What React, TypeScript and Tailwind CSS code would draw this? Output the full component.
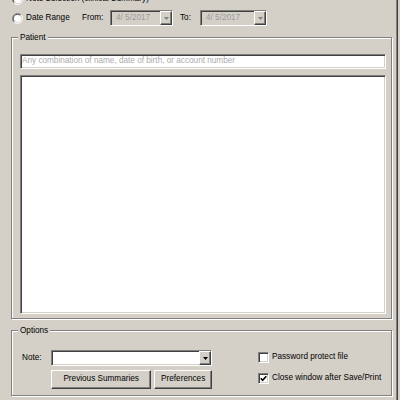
const sunken =
  'border border-t-[#808080] border-l-[#808080] border-b-white border-r-white shadow-[inset_1px_1px_0_#404040,inset_-1px_-1px_0_#d4d0c8]'
const raised =
  'border border-t-white border-l-white border-b-[#404040] border-r-[#404040] shadow-[inset_-1px_-1px_0_#808080]'
const etched = 'border border-[#808080] shadow-[inset_1px_1px_0_#fff,1px_1px_0_#fff]'

function Radio() {
  return (
    <svg width="11" height="11" viewBox="0 0 12 12" className="shrink-0">
      <circle cx="6" cy="6" r="5" fill="#fff" />
      <path d="M2.1 9.9 A5.5 5.5 0 0 1 9.9 2.1" stroke="#808080" fill="none" />
      <path d="M9.9 2.1 A5.5 5.5 0 0 1 2.1 9.9" stroke="#fff" fill="none" />
      <path d="M2.8 9.2 A4.5 4.5 0 0 1 9.2 2.8" stroke="#404040" fill="none" />
      <path d="M9.2 2.8 A4.5 4.5 0 0 1 2.8 9.2" stroke="#d4d0c8" fill="none" />
    </svg>
  )
}

function Arrow({ disabled }: { disabled?: boolean }) {
  return (
    <div className={`w-[12px] h-full flex items-center justify-center bg-[#d4d0c8] ${raised}`}>
      <svg width="5" height="3" viewBox="0 0 5 3">
        <polygon points="0,0 5,0 2.5,3" fill={disabled ? '#808080' : '#000'} />
      </svg>
    </div>
  )
}

function DateField({ width }: { width: string }) {
  return (
    <div className={`${width} h-[16px] flex items-stretch bg-[#d4d0c8] ${sunken}`}>
      <span className="flex-1 flex items-center pl-[5px] text-[#9a9a9a]">4/ 5/2017</span>
      <Arrow disabled />
    </div>
  )
}

function Check({ checked, label }: { checked?: boolean; label: string }) {
  return (
    <div className="h-[13px] flex items-center">
      <div className={`w-[11px] h-[11px] bg-white flex items-center justify-center ${sunken}`}>
        {checked && (
          <svg width="7" height="7" viewBox="0 0 7 7">
            <path d="M0.8 3.2 L2.6 5.2 L6.3 1.2" stroke="#000" strokeWidth="1.6" fill="none" />
          </svg>
        )}
      </div>
      <span className="ml-[3px]">{label}</span>
    </div>
  )
}

export default function App() {
  return (
    <div className="w-[400px] h-[400px] overflow-hidden bg-[#d4d0c8] flex font-['Liberation_Sans',Arial,sans-serif] text-[8.2px] text-black">
      <div className="w-[396px] flex flex-col">
        {/* Top radios */}
        <div className="-mt-[7px] h-[12px] flex items-center pl-[12px]">
          <Radio />
          <span className="ml-[3px]">Note Selection (clinical Summary)</span>
        </div>
        <div className="mt-[5px] h-[16px] flex items-center pl-[12px]">
          <Radio />
          <span className="ml-[3px] w-[56px]">Date Range</span>
          <span className="w-[28px]">From:</span>
          <DateField width="w-[63px]" />
          <span className="ml-[7px] w-[20px]">To:</span>
          <DateField width="w-[67px]" />
        </div>

        {/* Patient */}
        <div className={`relative mt-[11px] ml-[11px] w-[381px] h-[282px] pt-[16px] pl-[8px] ${etched}`}>
          <span className="absolute left-[6px] -top-[6px] px-[2px] bg-[#d4d0c8]">Patient</span>
          <div className={`w-[366px] h-[15px] bg-white flex items-center pl-[1px] text-[#ababab] ${sunken}`}>
            Any combination of name, date of birth, or account number
          </div>
          <div className={`mt-[6px] w-[366px] h-[239px] bg-white ${sunken}`} />
        </div>

        {/* Options */}
        <div className={`relative mt-[11px] ml-[11px] w-[381px] h-[66px] pt-[19px] pl-[10px] flex items-start ${etched}`}>
          <span className="absolute left-[6px] -top-[6px] px-[2px] bg-[#d4d0c8]">Options</span>
          <div className="w-[190px] flex flex-col">
            <div className="flex items-center">
              <span className="w-[29px]">Note:</span>
              <div className={`w-[162px] h-[16px] bg-white flex items-stretch justify-end ${sunken}`}>
                <Arrow />
              </div>
            </div>
            <div className="mt-[4px] pl-[29px] flex gap-[3px]">
              <button className={`w-[101px] h-[19px] bg-[#d4d0c8] ${raised}`}>Previous Summaries</button>
              <button className={`w-[58px] h-[19px] bg-[#d4d0c8] ${raised}`}>Preferences</button>
            </div>
          </div>
          <div className="ml-[46px] mt-[1px] flex flex-col gap-[8px]">
            <Check label="Password protect file" />
            <Check checked label="Close window after Save/Print" />
          </div>
        </div>
      </div>
      <div className="w-px bg-[#808080]" />
      <div className="w-px bg-[#404040]" />
    </div>
  )
}
